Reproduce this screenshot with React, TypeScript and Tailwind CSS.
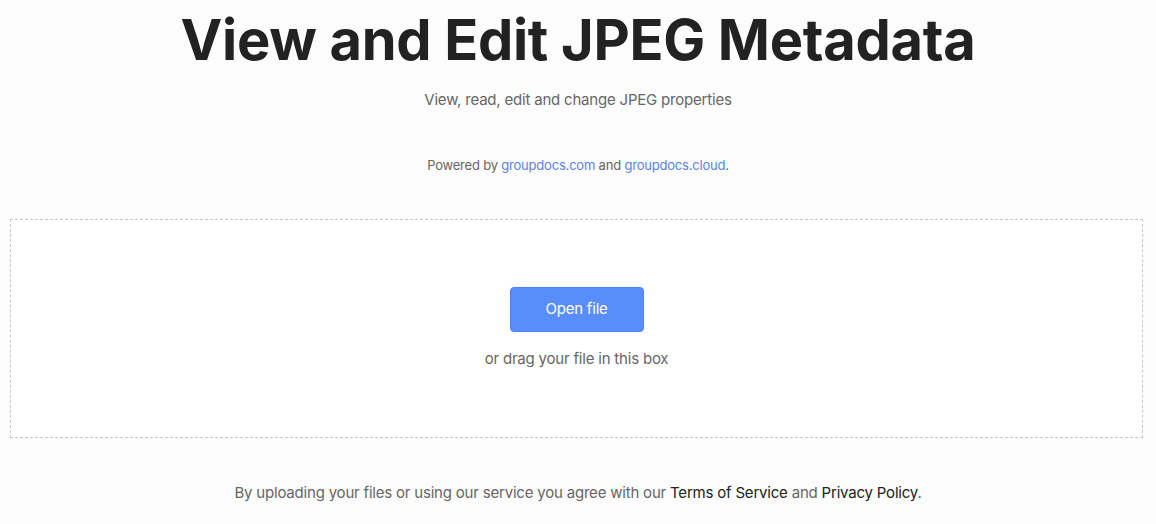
export default function App() {
  return (
    <div
      className="min-h-[524px] w-full bg-[#fcfcfc] text-[#666]"
      style={{ fontFamily: 'Inter, "Noto Sans", sans-serif' }}
    >
      <div className="flex flex-col items-center pt-[5px]">
        <h1 className="text-[56px] leading-[70px] font-bold text-[#222] tracking-[-0.3px]">
          View and Edit JPEG Metadata
        </h1>
        <p className="mt-[13px] text-[15px] leading-[24px] tracking-[-0.2px] text-[#666]">
          View, read, edit and change JPEG properties
        </p>
        <p className="mt-[43px] text-[13px] leading-[20px] tracking-[-0.2px] text-[#666]">
          Powered by <a className="text-[#5a83e6]">groupdocs.com</a> and{' '}
          <a className="text-[#5a83e6]">groupdocs.cloud</a>.
        </p>
      </div>

      <div className="ml-[10px] mr-[13px] mt-[44px] h-[219px] border border-dashed border-[#c8c8c8] bg-white flex flex-col items-center pt-[67px]">
        <button className="w-[134px] h-[45px] rounded-[4px] bg-[#5a8dfc] border border-[#4f84f5] text-white text-[15px] tracking-[-0.2px]">
          Open file
        </button>
        <p className="mt-[15px] text-[15px] leading-[24px] tracking-[-0.2px] text-[#666]">
          or drag your file in this box
        </p>
      </div>

      <p className="mt-[43px] text-center text-[15px] leading-[24px] tracking-[-0.2px] text-[#666]">
        By uploading your files or using our service you agree with our{' '}
        <a className="text-[#222]">Terms of Service</a> and{' '}
        <a className="text-[#222]">Privacy Policy</a>.
      </p>
    </div>
  )
}
